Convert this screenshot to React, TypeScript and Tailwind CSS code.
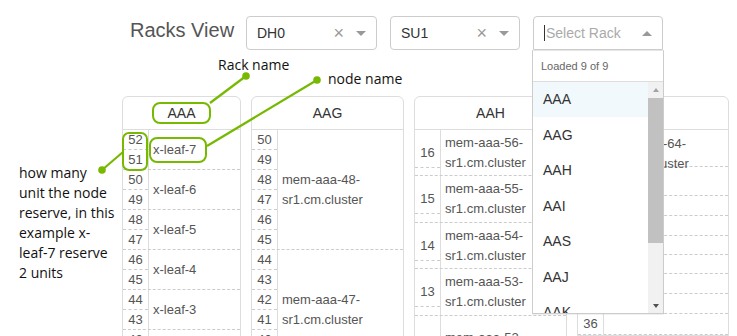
import React from 'react';

type Row = {
  nums: number[];
  label?: string[];
  h: string;
  split?: boolean;
  top?: boolean;
};

const rack1: Row[] = [
  { nums: [52, 51], label: ['x-leaf-7'], h: 'h-[40px]' },
  { nums: [50, 49], label: ['x-leaf-6'], h: 'h-[40px]' },
  { nums: [48, 47], label: ['x-leaf-5'], h: 'h-[40px]' },
  { nums: [46, 45], label: ['x-leaf-4'], h: 'h-[40px]' },
  { nums: [44, 43], label: ['x-leaf-3'], h: 'h-[40px]' },
  { nums: [42, 41], label: ['x-leaf-2'], h: 'h-[40px]' },
];

const rack2: Row[] = [
  { nums: [50, 49, 48, 47, 46, 45], label: ['mem-aaa-48-', 'sr1.cm.cluster'], h: 'h-[120px]' },
  { nums: [44, 43, 42, 41, 40, 39], label: ['mem-aaa-47-', 'sr1.cm.cluster'], h: 'h-[120px]' },
];

const rack3: Row[] = [
  { nums: [16], label: ['mem-aaa-56-', 'sr1.cm.cluster'], h: 'h-[46px]', split: true },
  { nums: [15], label: ['mem-aaa-55-', 'sr1.cm.cluster'], h: 'h-[47px]', split: true },
  { nums: [14], label: ['mem-aaa-54-', 'sr1.cm.cluster'], h: 'h-[46px]', split: true },
  { nums: [13], label: ['mem-aaa-53-', 'sr1.cm.cluster'], h: 'h-[47px]', split: true },
  { nums: [12], label: ['mem-aaa-52-', 'sr1.cm.cluster'], h: 'h-[64px]' },
];

const rack4: Row[] = [
  { nums: [44], label: ['mem-aaa-64-', 'sr1.cm.cluster'], h: 'h-[37px]', top: true },
  { nums: [43], h: 'h-[29px]' },
  { nums: [42], h: 'h-[20px]' },
  { nums: [41], h: 'h-[20px]' },
  { nums: [40], h: 'h-[19px]' },
  { nums: [39], h: 'h-[19px]' },
  { nums: [38], h: 'h-[20px]' },
  { nums: [37], h: 'h-[20px]' },
  { nums: [36], h: 'h-[21px]' },
];

const options = ['AAA', 'AAG', 'AAH', 'AAI', 'AAS', 'AAJ', 'AAK'];

function Rack({ name, w, rows }: { name: string; w: string; rows: Row[] }) {
  return (
    <div className={`${w} shrink-0 flex flex-col border border-[#ddd] rounded-t-[6px] bg-white`}>
      <div className="h-[33px] border-b border-[#ddd] flex items-center justify-center text-[14px] text-[#333]">
        {name}
      </div>
      {rows.map((r, i) => (
        <div key={i} className={`${r.h} shrink-0 flex border-b border-dashed border-[#ccc]`}>
          <div className="w-[26px] shrink-0 border-r border-[#ddd] flex flex-col text-[13px] text-[#555]">
            {r.split ? (
              <div className="h-[38px] pt-[9px] border-b border-dashed border-[#ccc] flex items-center justify-center">
                {r.nums[0]}
              </div>
            ) : (
              r.nums.map((n, j) =>
                j < r.nums.length - 1 ? (
                  <div key={n} className="h-[20px] shrink-0 border-b border-dashed border-[#ccc] flex items-center justify-center">
                    {n}
                  </div>
                ) : (
                  <div key={n} className="flex-1 flex items-center justify-center">
                    {n}
                  </div>
                )
              )
            )}
          </div>
          <div
            className={`flex-1 min-w-0 flex flex-col pl-[4px] text-[13px] leading-[20px] text-[#555] ${
              r.top ? 'justify-start pt-[4px]' : 'justify-center'
            }`}
          >
            {r.label?.map((l) => (
              <div key={l} className="whitespace-nowrap">
                {l}
              </div>
            ))}
          </div>
        </div>
      ))}
    </div>
  );
}

function Select({ value, w }: { value: string; w: string }) {
  return (
    <div className={`${w} h-[34px] border border-[#ccc] rounded-[4px] bg-white flex items-center pl-[10px] pr-[10px]`}>
      <span className="flex-1 text-[14px] text-[#333]">{value}</span>
      <span className="text-[18px] leading-none text-[#999] mr-[12px]">×</span>
      <span className="w-0 h-0 border-x-[5px] border-x-transparent border-t-[5px] border-t-[#999]" />
    </div>
  );
}

function RackSelect() {
  return (
    <div className="relative w-[130px]">
      <div className="h-[34px] border border-[#ccc] rounded-t-[4px] bg-white flex items-center pl-[10px] pr-[10px]">
        <span className="w-px h-[16px] bg-[#333]" />
        <span className="flex-1 text-[14px] text-[#aaa] pl-px">Select Rack</span>
        <span className="w-0 h-0 border-x-[5px] border-x-transparent border-b-[5px] border-b-[#999]" />
      </div>
      {/* open menu */}
      <div className="absolute z-10 top-full left-[-1px] w-[132px] h-[264px] bg-white border border-[#ccc] border-t-[#e6e6e6] flex flex-col shadow-[0_1px_0_rgba(0,0,0,0.06)]">
        <div className="h-[31px] shrink-0 border-b border-[#ddd] flex items-center pl-[8px] text-[11px] text-[#666]">
          Loaded 9 of 9
        </div>
        <div className="flex-1 flex overflow-hidden">
          <div className="flex-1 flex flex-col overflow-hidden">
            {options.map((o, i) => (
              <div
                key={o}
                className={`${i % 2 === 0 ? 'h-[35px]' : 'h-[36px]'} shrink-0 flex items-center pl-[10px] text-[14px] text-[#333] ${
                  i === 0 ? 'bg-[#f2f9fc]' : ''
                }`}
              >
                {o}
              </div>
            ))}
          </div>
          <div className="w-[15px] shrink-0 bg-[#f1f1f1] flex flex-col">
            <div className="h-[15px] flex items-center justify-center">
              <span className="w-0 h-0 border-x-[3.5px] border-x-transparent border-b-[4px] border-b-[#a3a3a3]" />
            </div>
            <div className="h-[145px] mt-px bg-[#c1c1c1]" />
            <div className="flex-1" />
            <div className="h-[15px] flex items-center justify-center">
              <span className="w-0 h-0 border-x-[3.5px] border-x-transparent border-t-[4px] border-t-[#505050]" />
            </div>
          </div>
        </div>
      </div>
    </div>
  );
}

export default function App() {
  const green = '#76b900';
  return (
    <div className="relative w-[737px] h-[336px] overflow-hidden bg-white font-['Liberation_Sans',Arial,sans-serif]">
      <div className="flex items-center h-[34px] mt-[16px] ml-[130px] gap-[13px]">
        <div className="w-[103px] pb-[6px] text-[20px] text-[#555] whitespace-nowrap">Racks View</div>
        <Select value="DH0" w="w-[131px]" />
        <Select value="SU1" w="w-[130px]" />
        <RackSelect />
      </div>

      <div className="flex items-start gap-[10px] mt-[46px] pl-[122px]">
        <Rack name="AAA" w="w-[119px]" rows={rack1} />
        <Rack name="AAG" w="w-[153px]" rows={rack2} />
        <Rack name="AAH" w="w-[153px]" rows={rack3} />
        <Rack name="AAI" w="w-[152px]" rows={rack4} />
      </div>

      {/* annotations */}
      <svg className="absolute inset-0 pointer-events-none" width="737" height="336">
        <rect x="153" y="103" width="57" height="20" rx="7" fill="none" stroke={green} strokeWidth="2" />
        <rect x="123" y="133" width="24" height="37" rx="6" fill="none" stroke={green} strokeWidth="2" />
        <rect x="150" y="138" width="56" height="24" rx="7" fill="none" stroke={green} strokeWidth="2" />
        <line x1="246" y1="76" x2="210" y2="103" stroke={green} strokeWidth="2.2" />
        <line x1="317" y1="80" x2="207" y2="146" stroke={green} strokeWidth="2.2" />
        <line x1="102" y1="170" x2="123" y2="152" stroke={green} strokeWidth="2.2" />
        <circle cx="246" cy="76" r="3.8" fill={green} />
        <circle cx="317" cy="80" r="3.8" fill={green} />
        <circle cx="102" cy="170" r="3.8" fill={green} />
      </svg>
      <div className="absolute left-[218px] top-[55px] text-[14px] leading-[20px] text-[#111] font-['Open_Sans',sans-serif]">
        Rack name
      </div>
      <div className="absolute left-[328px] top-[69px] text-[14px] leading-[20px] text-[#111] font-['Open_Sans',sans-serif]">
        node name
      </div>
      <div className="absolute left-[19px] top-[163px] text-[14px] leading-[20px] text-[#111] font-['Open_Sans',sans-serif] whitespace-nowrap">
        how many
        <br />
        unit the node
        <br />
        reserve, in this
        <br />
        example x-
        <br />
        leaf-7 reserve
        <br />2 units
      </div>
    </div>
  );
}
